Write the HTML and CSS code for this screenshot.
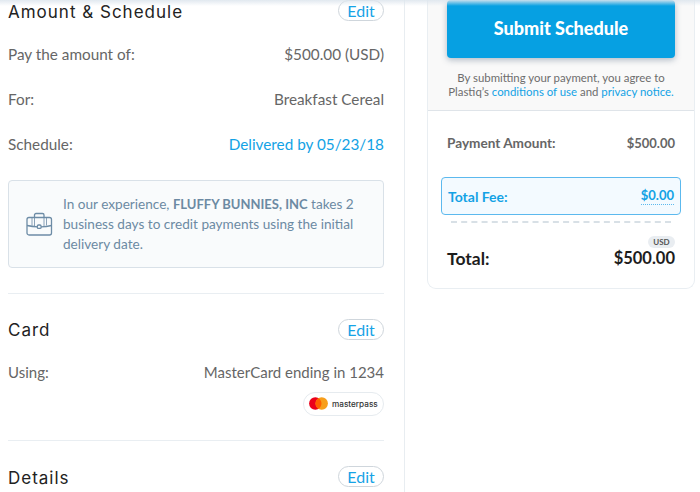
FILE: index.html
```html
<!DOCTYPE html>
<html lang="en">
<head>
<meta charset="utf-8">
<title>Review Schedule</title>
<link rel="stylesheet" href="styles.css">
</head>
<body>
<div class="page">
  <div class="top-shade"></div>
  <main class="main">
    <section class="section first">
      <div class="head"><h2>Amount &amp; Schedule</h2><button class="edit">Edit</button></div>
      <div class="row"><span>Pay the amount of:</span><span>$500.00 (USD)</span></div>
      <div class="row"><span>For:</span><span>Breakfast Cereal</span></div>
      <div class="row"><span>Schedule:</span><span class="blue">Delivered by 05/23/18</span></div>
      <div class="notice">
        <svg class="case" width="27" height="25" viewBox="0 0 27 25" fill="none" stroke="#6d8ca6" stroke-width="1.3">
          <rect x="1" y="5.500" width="24.500" height="17.500" rx="2"/>
          <path d="M8.500 5.500V3a1.500 1.500 0 0 1 1.500-1.500h6.500A1.500 1.500 0 0 1 18 3v2.500"/>
          <path d="M1 13.500c4 .8 8 1.200 10.500 1.300M15 14.800c3.500-.1 7-.5 10.500-1.300"/>
          <path d="M6 5.500v8M8.500 5.500v8.500M18 5.500v8.500M20.500 5.500v8" stroke-width=".8"/>
          <rect x="11.300" y="13" width="3.800" height="3.400" rx="1.200"/>
        </svg>
        <p>In our experience, <b>FLUFFY BUNNIES, INC</b> takes 2 business days to credit payments using the initial delivery date.</p>
      </div>
    </section>
    <section class="section card-section">
      <div class="head"><h2>Card</h2><button class="edit">Edit</button></div>
      <div class="row"><span>Using:</span><span>MasterCard ending in 1234</span></div>
      <div class="pass-row">
        <div class="pass">
          <svg width="19" height="13" viewBox="0 0 19 13"><circle cx="6.300" cy="6.500" r="6.200" fill="#eb001b"/><circle cx="12.700" cy="6.500" r="6.200" fill="#f79e1b"/><path d="M9.500 1.200a6.200 6.200 0 0 1 0 10.600 6.200 6.200 0 0 1 0-10.600z" fill="#ff5f00"/></svg>
          <span>masterpass</span>
        </div>
      </div>
    </section>
    <section class="section last">
      <div class="head"><h2>Details</h2><button class="edit">Edit</button></div>
    </section>
  </main>
  <aside class="aside">
    <div class="summary">
      <div class="submit-area">
        <button class="submit">Submit Schedule</button>
        <p>By submitting your payment, you agree to Plastiq’s <a href="#">conditions of use</a> and <a href="#">privacy notice.</a></p>
      </div>
      <div class="totals">
        <div class="line"><span>Payment Amount:</span><span class="num">$500.00</span></div>
        <div class="fee"><span>Total Fee:</span><span class="fee-value">$0.00</span></div>
        <div class="dash"></div>
        <div class="usd-row"><span class="usd">USD</span></div>
        <div class="total"><span class="total-label">Total:</span><span>$500.00</span></div>
      </div>
    </div>
  </aside>
</div>
</body>
</html>
```
FILE: styles.css
```css
* { box-sizing: border-box; }
html, body { margin: 0; padding: 0; height: 100%; background: #fff; }
body { font-family: "Lato", "Open Sans", sans-serif; color: #666; overflow: hidden; }
.page { position: relative; display: flex; width: 700px; height: 492px; overflow: hidden; }
.top-shade { position: absolute; z-index: 2; left: 0; top: 0; width: 100%; height: 6px; background: linear-gradient(rgba(222,230,238,.9), rgba(255,255,255,0)); }
.main { width: 405px; flex: none; padding: 0 20px 0 8px; border-right: 1px solid #e8edf1; }
.section { border-bottom: 1px solid #e9eef2; }
.section.first { height: 294px; }
.card-section { height: 147px; padding-top: 25px; }
.last { border-bottom: 0; padding-top: 25px; }
.head { display: flex; justify-content: space-between; align-items: center; height: 21px; margin-bottom: 10px; }
h2 { margin: 0; font-family: "Inter", sans-serif; font-size: 17px; font-weight: 400; color: #222; letter-spacing: 1px; }
.first h2, .last h2 { padding-top: 2px; }
.edit { width: 46px; height: 21px; padding: 0 0 2px; background: #fff; border: 1px solid #cfd6dc; border-radius: 11px; color: #17a3e6; font: 16px "Lato", sans-serif; }
.row { display: flex; justify-content: space-between; align-items: center; height: 45px; font-size: 15.300px; color: #666; }
.blue { color: #12a2e5; }
.notice { display: flex; align-items: center; height: 88px; margin-top: 14px; padding: 0 20px 0 17px; background: #f9fbfc; border: 1px solid #d9e1e8; border-radius: 4px; color: #6c8aa3; }
.case { flex: none; margin-right: 10px; }
.notice p { margin: 0; font-size: 13.600px; line-height: 20px; }
.notice b { font-weight: 700; font-size: 13px; }
.card-section .head { margin-bottom: 17px; }
.card-section .row { height: 30px; font-size: 15px; }
.pass-row { display: flex; justify-content: flex-end; margin-top: 5px; }
.pass { display: flex; align-items: center; gap: 4px; width: 81px; height: 24px; padding: 0 0 1px 5px; background: #fff; border: 1px solid #e6ebef; border-radius: 12px; }
.pass span { font: 500 8.200px "Inter", sans-serif; color: #333; }
.aside { width: 295px; flex: none; padding: 0 5px 0 22px; }
.summary { width: 268px; height: 289px; background: #fff; border: 1px solid #e9eef2; border-top: 0; border-radius: 0 0 9px 9px; }
.submit-area { height: 111px; padding: 0 19px; background: #f9f9f9; border-bottom: 1px solid #dfe4e9; }
.submit { display: block; width: 228px; height: 58px; padding: 0 0 2px; border: 0; border-radius: 4px; background: #06a0e2; color: #fff; font: 900 18px "Lato", sans-serif; box-shadow: 0 2px 6px rgba(40,70,100,.35); }
.submit-area p { margin: 13px -4px 0; font-size: 11.400px; line-height: 14px; text-align: center; color: #6d6d6d; }
.submit-area a { color: #12a2e5; text-decoration: none; }
.line { display: flex; justify-content: space-between; align-items: center; height: 20px; margin: 22px 19px 0; font-size: 13.600px; font-weight: 700; color: #666; }
.num { font-size: 13px; }
.fee { display: flex; justify-content: space-between; align-items: center; height: 38px; margin: 24px 13px 0; padding: 0 6px; background: #f3faff; border: 1px solid #5cb9ee; border-radius: 4px; font-size: 14px; font-weight: 700; color: #12a2e5; }
.fee-value { font-size: 13px; border-bottom: 1px dotted #5cb9ee; line-height: 17px; }
.dash { height: 1px; margin: 6px 23px 0; border-top: 2px dashed #d8e0e6; }
.usd-row { display: flex; justify-content: flex-end; margin: 13px 19px 0; }
.usd { width: 27px; height: 12px; border-radius: 6px; background: #e9edf1; color: #555; font-size: 8px; font-weight: 700; line-height: 12px; text-align: center; }
.total { display: flex; justify-content: space-between; align-items: center; height: 22px; margin: -1px 19px 0; font-size: 16.500px; font-weight: 700; color: #1d1d1d; }
.total-label { font-size: 17.500px; }
```
